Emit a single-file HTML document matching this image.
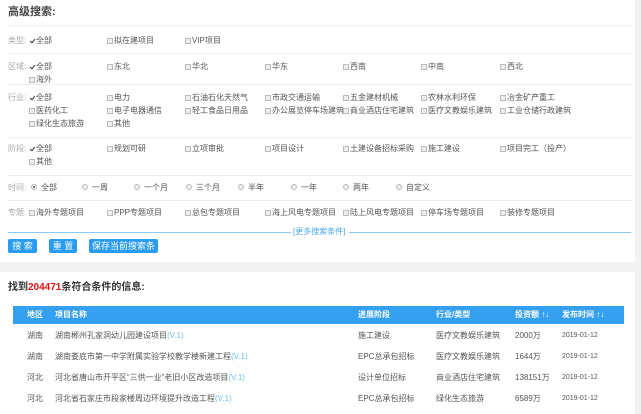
<!DOCTYPE html><html><head><meta charset="utf-8"><style>
*{margin:0;padding:0;box-sizing:border-box}
body{width:641px;height:414px;background:#f2f2f2;font-family:"Liberation Sans","Noto Sans CJK SC",sans-serif;font-size:8px;color:#555;position:relative;overflow:hidden}
.p1{position:absolute;left:0;top:0;width:635px;height:262px;background:#fff}
.p2{position:absolute;left:0;top:272px;width:635px;height:142px;background:#fff}
.a{position:absolute;white-space:nowrap;line-height:11px}
.hl{position:absolute;left:8px;width:624px;height:1px;background:#eee}
.lb{color:#aaa}
.cb{display:inline-block;width:6px;height:6px;border:1px solid #bbb;background:#eee;margin-right:1px;vertical-align:-1px}
.ck{background:#fff;border-color:#fff;position:relative}
.ck:after{content:"";position:absolute;left:1px;top:-1px;width:2px;height:4px;border:solid #333;border-width:0 1.5px 1.5px 0;transform:rotate(40deg)}
.rd{display:inline-block;width:6px;height:6px;border:1px solid #bbb;border-radius:50%;background:#eee;margin-right:4px;vertical-align:0}
.rs{background:#555;box-shadow:inset 0 0 0 1px #fff}
.btn{position:absolute;top:239px;height:14px;background:#2a9cf0;color:#fff;font-size:9px;line-height:14px;text-align:center;border-radius:2px}
.th{position:absolute;left:13px;top:306px;width:611px;height:18px;background:#35a0f0}
.w{color:#fff;font-weight:bold}
.v{color:#6cc3f3}
</style></head><body>
<div class="p1"></div><div class="p2"></div>
<div class="a" style="left:8px;top:7px;font-size:11px;font-weight:bold;color:#444">高级搜索:</div>
<div class="hl" style="top:25px"></div><div class="hl" style="top:53px"></div><div class="hl" style="top:84px"></div><div class="hl" style="top:137px"></div><div class="hl" style="top:175px"></div><div class="hl" style="top:200px"></div>

<div class="a lb" style="left:8px;top:35px">类型:</div>
<div class="a" style="left:29px;top:35px"><i class="cb ck"></i>全部</div>
<div class="a" style="left:107px;top:35px"><i class="cb"></i>拟在建项目</div>
<div class="a" style="left:185px;top:35px"><i class="cb"></i>VIP项目</div>

<div class="a lb" style="left:8px;top:61px">区域:</div>
<div class="a" style="left:29px;top:61px"><i class="cb ck"></i>全部</div>
<div class="a" style="left:107px;top:61px"><i class="cb"></i>东北</div>
<div class="a" style="left:185px;top:61px"><i class="cb"></i>华北</div>
<div class="a" style="left:265px;top:61px"><i class="cb"></i>华东</div>
<div class="a" style="left:343px;top:61px"><i class="cb"></i>西南</div>
<div class="a" style="left:421px;top:61px"><i class="cb"></i>中南</div>
<div class="a" style="left:500px;top:61px"><i class="cb"></i>西北</div>
<div class="a" style="left:29px;top:74px"><i class="cb"></i>海外</div>

<div class="a lb" style="left:8px;top:92px">行业:</div>
<div class="a" style="left:29px;top:92px"><i class="cb ck"></i>全部</div>
<div class="a" style="left:107px;top:92px"><i class="cb"></i>电力</div>
<div class="a" style="left:185px;top:92px"><i class="cb"></i>石油石化天然气</div>
<div class="a" style="left:265px;top:92px"><i class="cb"></i>市政交通运输</div>
<div class="a" style="left:343px;top:92px"><i class="cb"></i>五金建材机械</div>
<div class="a" style="left:421px;top:92px"><i class="cb"></i>农林水利环保</div>
<div class="a" style="left:500px;top:92px"><i class="cb"></i>冶金矿产重工</div>
<div class="a" style="left:29px;top:105px"><i class="cb"></i>医药化工</div>
<div class="a" style="left:107px;top:105px"><i class="cb"></i>电子电器通信</div>
<div class="a" style="left:185px;top:105px"><i class="cb"></i>轻工食品日用品</div>
<div class="a" style="left:265px;top:105px"><i class="cb"></i>办公展览停车场建筑</div>
<div class="a" style="left:343px;top:105px"><i class="cb"></i>商业酒店住宅建筑</div>
<div class="a" style="left:421px;top:105px"><i class="cb"></i>医疗文教娱乐建筑</div>
<div class="a" style="left:500px;top:105px"><i class="cb"></i>工业仓储行政建筑</div>
<div class="a" style="left:29px;top:118px"><i class="cb"></i>绿化生态旅游</div>
<div class="a" style="left:107px;top:118px"><i class="cb"></i>其他</div>

<div class="a lb" style="left:8px;top:143px">阶段:</div>
<div class="a" style="left:29px;top:143px"><i class="cb ck"></i>全部</div>
<div class="a" style="left:107px;top:143px"><i class="cb"></i>规划可研</div>
<div class="a" style="left:185px;top:143px"><i class="cb"></i>立项审批</div>
<div class="a" style="left:265px;top:143px"><i class="cb"></i>项目设计</div>
<div class="a" style="left:343px;top:143px"><i class="cb"></i>土建设备招标采购</div>
<div class="a" style="left:421px;top:143px"><i class="cb"></i>施工建设</div>
<div class="a" style="left:500px;top:143px"><i class="cb"></i>项目完工（投产）</div>
<div class="a" style="left:29px;top:156px"><i class="cb"></i>其他</div>

<div class="a lb" style="left:8px;top:182px">时间:</div>
<div class="a" style="left:31px;top:182px"><i class="rd rs"></i>全部</div>
<div class="a" style="left:82px;top:182px"><i class="rd"></i>一周</div>
<div class="a" style="left:134px;top:182px"><i class="rd"></i>一个月</div>
<div class="a" style="left:186px;top:182px"><i class="rd"></i>三个月</div>
<div class="a" style="left:238px;top:182px"><i class="rd"></i>半年</div>
<div class="a" style="left:291px;top:182px"><i class="rd"></i>一年</div>
<div class="a" style="left:343px;top:182px"><i class="rd"></i>两年</div>
<div class="a" style="left:396px;top:182px"><i class="rd"></i>自定义</div>

<div class="a lb" style="left:8px;top:207px">专题:</div>
<div class="a" style="left:29px;top:207px"><i class="cb"></i>海外专题项目</div>
<div class="a" style="left:107px;top:207px"><i class="cb"></i>PPP专题项目</div>
<div class="a" style="left:185px;top:207px"><i class="cb"></i>总包专题项目</div>
<div class="a" style="left:265px;top:207px"><i class="cb"></i>海上风电专题项目</div>
<div class="a" style="left:343px;top:207px"><i class="cb"></i>陆上风电专题项目</div>
<div class="a" style="left:421px;top:207px"><i class="cb"></i>停车场专题项目</div>
<div class="a" style="left:500px;top:207px"><i class="cb"></i>装修专题项目</div>

<div style="position:absolute;left:8px;top:232px;width:283px;height:1px;background:#8cc8f3"></div>
<div style="position:absolute;left:349px;top:232px;width:282px;height:1px;background:#8cc8f3"></div>
<div class="a" style="left:293px;top:226px;color:#4aa6ea">[更多搜索条件]</div>
<div class="btn" style="left:8px;width:29px">搜 索</div>
<div class="btn" style="left:49px;width:28px">重 置</div>
<div class="btn" style="left:89px;width:69px">保存当前搜索条件</div>

<div class="a" style="left:8px;top:282px;font-size:10px;font-weight:bold;color:#333">找到<span style="color:#e01010">204471</span>条符合条件的信息:</div>
<div class="th"></div>
<div class="a w" style="left:27px;top:309px">地区</div>
<div class="a w" style="left:55px;top:309px">项目名称</div>
<div class="a w" style="left:358px;top:309px">进展阶段</div>
<div class="a w" style="left:436px;top:309px">行业/类型</div>
<div class="a w" style="left:515px;top:309px">投资额 ↑↓</div>
<div class="a w" style="left:562px;top:309px">发布时间 ↑↓</div>

<div class="a" style="left:27px;top:330px">湖南</div><div class="a" style="left:55px;top:330px">湖南郴州孔家洞幼儿园建设项目<span class="v">(V.1)</span></div><div class="a" style="left:358px;top:330px">施工建设</div><div class="a" style="left:436px;top:330px">医疗文教娱乐建筑</div><div class="a" style="left:515px;top:330px">2000万</div><div class="a" style="left:562px;top:330px;font-size:7px">2019-01-12</div>
<div class="a" style="left:27px;top:351px">湖南</div><div class="a" style="left:55px;top:351px">湖南娄底市第一中学附属实验学校教学楼新建工程<span class="v">(V.1)</span></div><div class="a" style="left:358px;top:351px">EPC总承包招标</div><div class="a" style="left:436px;top:351px">医疗文教娱乐建筑</div><div class="a" style="left:515px;top:351px">1644万</div><div class="a" style="left:562px;top:351px;font-size:7px">2019-01-12</div>
<div class="a" style="left:27px;top:372px">河北</div><div class="a" style="left:55px;top:372px">河北省唐山市开平区“三供一业”老旧小区改造项目<span class="v">(V.1)</span></div><div class="a" style="left:358px;top:372px">设计单位招标</div><div class="a" style="left:436px;top:372px">商业酒店住宅建筑</div><div class="a" style="left:515px;top:372px">138151万</div><div class="a" style="left:562px;top:372px;font-size:7px">2019-01-12</div>
<div class="a" style="left:27px;top:393px">河北</div><div class="a" style="left:55px;top:393px">河北省石家庄市段家楼周边环境提升改造工程<span class="v">(V.1)</span></div><div class="a" style="left:358px;top:393px">EPC总承包招标</div><div class="a" style="left:436px;top:393px">绿化生态旅游</div><div class="a" style="left:515px;top:393px">6589万</div><div class="a" style="left:562px;top:393px;font-size:7px">2019-01-12</div>
</body></html>
